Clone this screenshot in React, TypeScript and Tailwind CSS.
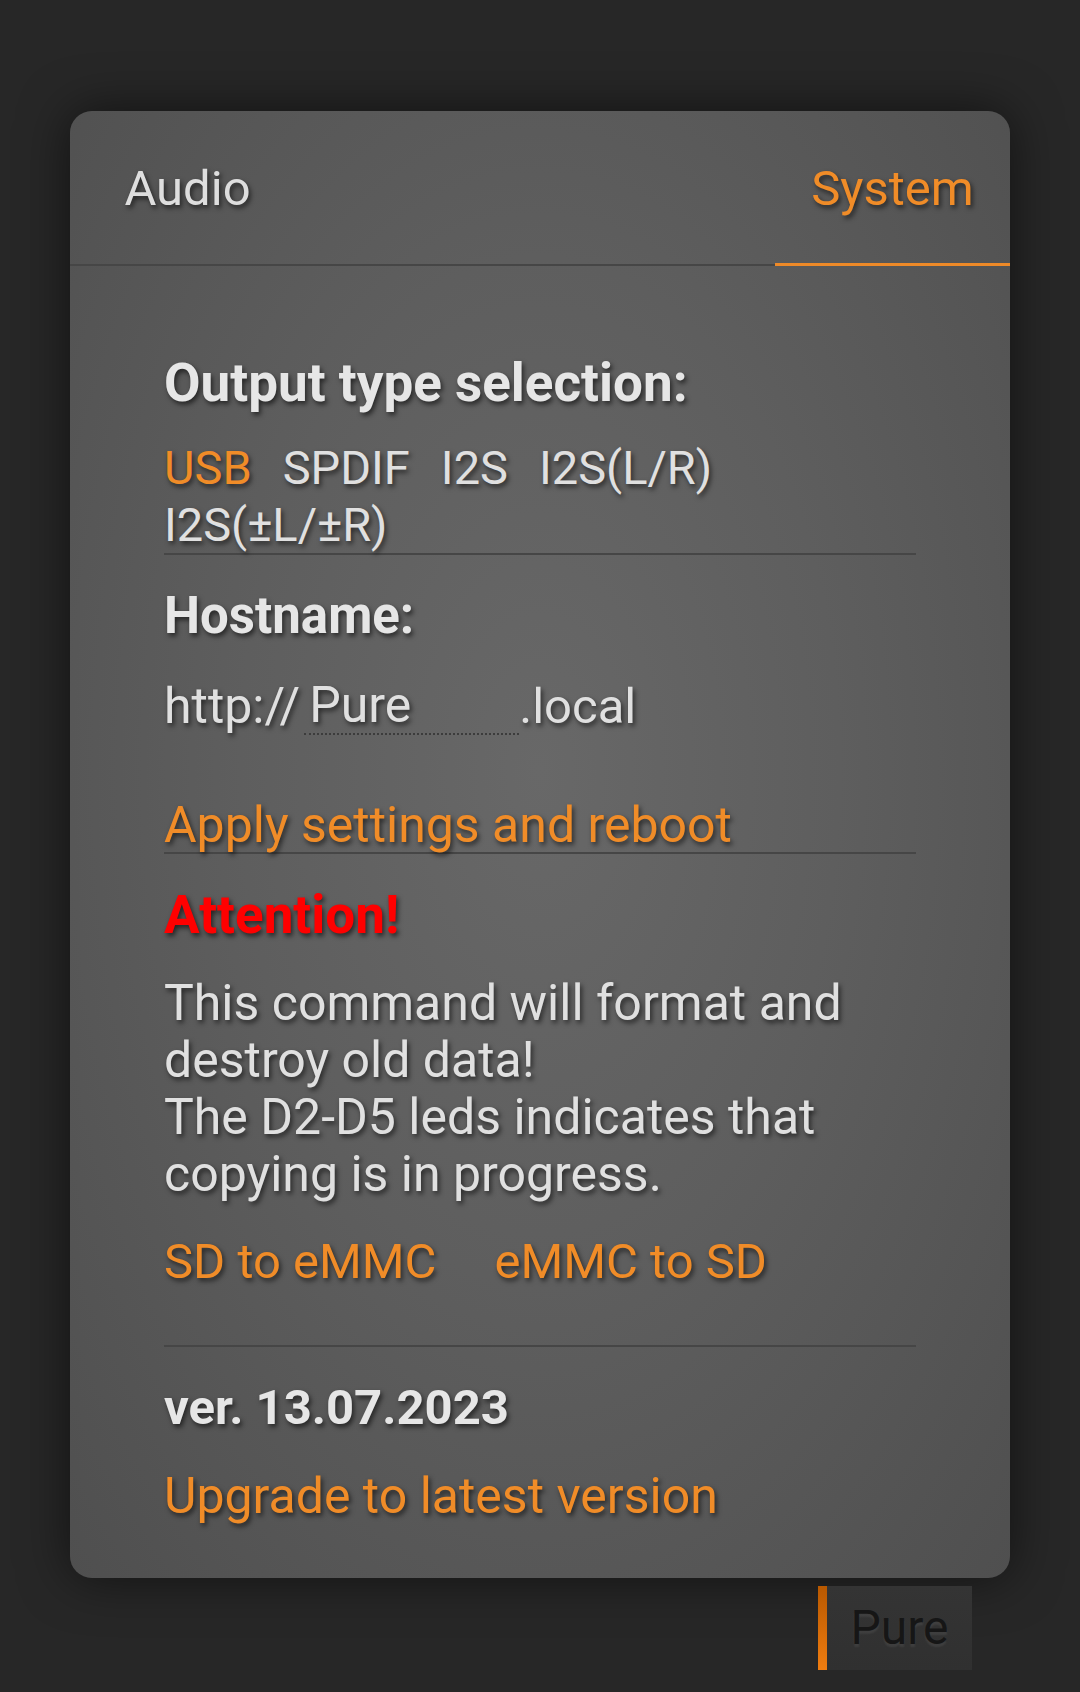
import React from "react";

const shadow = "[text-shadow:2px_3px_5px_rgba(0,0,0,0.6)]";

const outputs = ["USB", "SPDIF", "I2S", "I2S(L/R)", "I2S(±L/±R)"];

export default function App(): React.ReactElement {
   const active = "USB";

   return (
      <div className="min-h-[1692px] bg-[#272727] pt-[111px] font-['Roboto',sans-serif]">
         <div className="mx-auto w-[940px] rounded-[22px] bg-[radial-gradient(ellipse_at_50%_45%,#686868_0%,#5e5e5e_45%,#4f4f4f_100%)] pb-[53px] shadow-[0_0_50px_rgba(0,0,0,0.55)]">
            <div className="flex justify-between border-b-2 border-[#464646]">
               <button
                  className={`-mb-[2px] flex h-[155px] w-[235px] items-center justify-center border-b-[3px] border-transparent pt-[4px] text-[49px] text-[#dedede] ${shadow}`}
               >
                  Audio
               </button>
               <button
                  className={`-mb-[2px] flex h-[155px] w-[235px] items-center justify-center border-b-[3px] border-[#ee8a28] pt-[4px] text-[49px] text-[#f08c28] ${shadow}`}
               >
                  System
               </button>
            </div>

            <div className="px-[94px] pt-[89px] text-[50px] leading-[57px] text-[#e0e0e0]">
               <h2 className={`text-[53px] font-bold text-[#e6e6e6] ${shadow}`}>Output type selection:</h2>

               <ul className="mt-[27px] flex flex-wrap gap-x-[31px] border-b-2 border-[#464646] text-[47px]">
                  {outputs.map((o) => (
                     <li key={o} className={`${o === active ? "text-[#f08c28]" : "text-[#e0e0e0]"} ${shadow}`}>
                        {o}
                     </li>
                  ))}
               </ul>

               <h2 className={`mt-[32px] text-[51px] font-bold text-[#e6e6e6] ${shadow}`}>Hostname:</h2>
               <div className={`mt-[34px] flex items-center ${shadow}`}>
                  <span>http://</span>
                  <input
                     readOnly
                     defaultValue="Pure"
                     className={`ml-[4px] h-[57px] w-[215px] border-b-2 border-dotted border-[#3c3c3c] bg-transparent pl-[5px] text-[50px] leading-[57px] text-[#e0e0e0] outline-none ${shadow}`}
                  />
                  <span className="text-[49px]">.local</span>
               </div>

               <a className={`mt-[63px] block border-b-2 border-[#464646] leading-[54px] text-[#f08c28] ${shadow}`}>
                  Apply settings and reboot
               </a>

               <h3 className={`mt-[33px] text-[53px] font-bold text-[#ff0000] ${shadow}`}>Attention!</h3>
               <p className={`mt-[31px] ${shadow}`}>
                  This command will format and destroy old data!
                  <br />
                  The D2-D5 leds indicates that copying is in progress.
               </p>

               <div className="mt-[30px] flex gap-x-[58px] text-[49px] text-[#f08c28]">
                  <a className={shadow}>SD to eMMC</a>
                  <a className={shadow}>eMMC to SD</a>
               </div>

               <div className="mt-[55px] h-[2px] bg-[#464646]" />

               <p className={`mt-[32px] text-[49px] font-bold text-[#e6e6e6] ${shadow}`}>ver. 13.07.2023</p>
               <a className={`mt-[32px] block text-[#f08c28] ${shadow}`}>Upgrade to latest version</a>
            </div>
         </div>

         <div className="mt-[8px] flex justify-end pr-[108px]">
            <div className="flex h-[84px]">
               <span className="w-[9px] bg-[linear-gradient(to_bottom,#b85800,#f07d10)]" />
               <span className="flex w-[145px] items-center justify-center bg-[linear-gradient(to_bottom,#343434,#303030)] text-[48px] text-[#161616] [text-shadow:0_3px_2px_rgba(255,255,255,0.07)]">
                  Pure
               </span>
            </div>
         </div>
      </div>
   );
}
